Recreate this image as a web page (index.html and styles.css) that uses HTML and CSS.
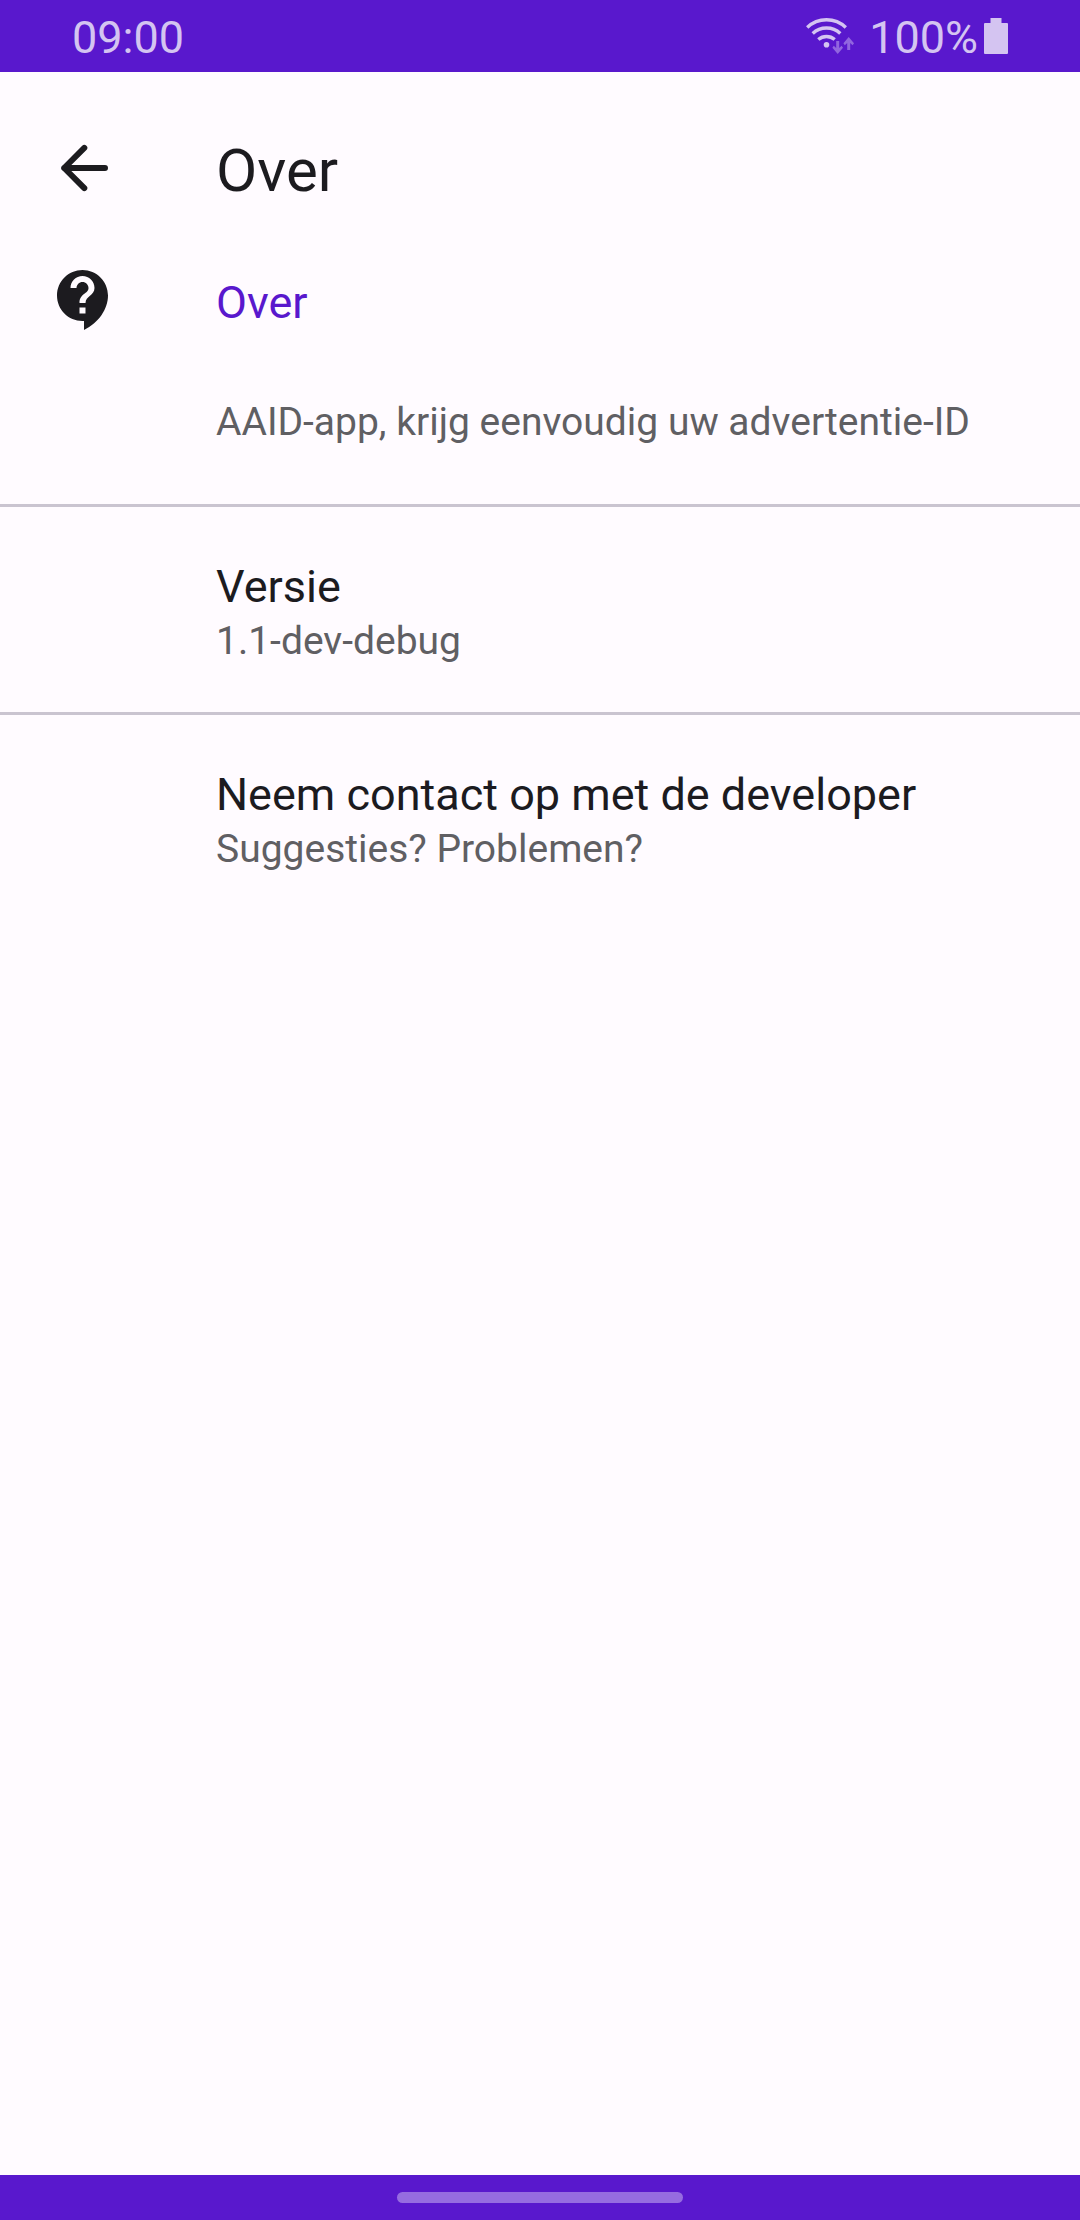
FILE: index.html
```html
<!DOCTYPE html>
<html lang="nl">
<head>
<meta charset="utf-8">
<meta name="viewport" content="width=device-width, initial-scale=1">
<title>Over</title>
<link rel="stylesheet" href="styles.css">
</head>
<body>
<div class="status-bar">
  <time class="status-clock">09:00</time>
  <div class="status-icons">
    <svg class="wifi" viewBox="0 0 48 36" aria-hidden="true">
      <g fill="none" stroke="currentColor" stroke-width="3.400">
        <path d="M1.200 9.500A28 28 0 0 1 39.800 9.500"/>
        <path d="M6.700 15.500A20 20 0 0 1 34.300 15.500"/>
        <path d="M12.300 21.500A12.500 12.500 0 0 1 28.700 21.500"/>
      </g>
      <circle cx="20.500" cy="26.700" r="2.800" fill="currentColor"/>
      <path class="wifi-traffic" d="M30.200 23h3v7l2.400-2.300 1.400 2-5.300 6.300-5.300-6.300 1.400-2 2.400 2.300zM41.200 32h3v-7l2.400 2.300 1.400-2-5.300-6.300-5.300 6.300 1.400 2 2.400-2.300z"/>
    </svg>
    <span class="status-level">100%</span>
    <svg class="battery" viewBox="0 0 24 36" aria-hidden="true">
      <path fill="currentColor" d="M6.500 0h11v5H23q1 0 1 1v29q0 1-1 1H1q-1 0-1-1V6q0-1 1-1h5.500z"/>
    </svg>
  </div>
</div>

<header class="app-bar">
  <button class="back" type="button" aria-label="Terug">
    <svg class="icon" viewBox="0 0 24 24" aria-hidden="true">
      <path fill="none" stroke="currentColor" stroke-width="2" stroke-linecap="round" stroke-linejoin="round" d="M19 12H5.400M12.100 5.300 5.400 12l6.700 6.700"/>
    </svg>
  </button>
  <h1 class="app-title">Over</h1>
</header>

<main class="content">
  <section class="about">
    <svg class="icon" viewBox="0 0 24 24" aria-hidden="true">
      <path fill="currentColor" d="M11.500 2C6.810 2 3 5.810 3 10.500S6.810 19 11.500 19h.500v3c4.860-2.340 8-7 8-11.500C20 5.810 16.190 2 11.500 2zm1 14.500h-2v-2h2v2zm0-3.500h-2c0-3.250 3-3 3-5 0-1.100-.900-2-2-2s-2 .900-2 2h-2c0-2.210 1.790-4 4-4s4 1.790 4 4c0 2.500-3 2.750-3 5z"/>
    </svg>
    <h2 class="section-title">Over</h2>
  </section>
  <p class="row intro summary">AAID-app, krijg eenvoudig uw advertentie-ID</p>
  <div class="row item">
    <h3 class="item-title">Versie</h3>
    <p class="summary">1.1-dev-debug</p>
  </div>
  <a class="row item" href="#contact">
    <span class="item-title">Neem contact op met de developer</span>
    <span class="summary">Suggesties? Problemen?</span>
  </a>
</main>

<div class="nav-bar"><div class="nav-handle"></div></div>
</body>
</html>
```
FILE: styles.css
```css
* {
  box-sizing: border-box;
}

body {
  display: flex;
  flex-direction: column;
  min-height: 100vh;
  margin: 0;
  background: #fffbff;
  color: #1c1b1f;
  font-family: Roboto, "Noto Sans", sans-serif;
}

h1,
h2,
h3,
p {
  margin: 0;
  font-weight: 400;
}

.status-bar {
  display: flex;
  align-items: center;
  justify-content: space-between;
  height: 72px;
  padding: 0 72px;
  background: #5918cd;
  color: #d4c4f1;
  font-size: 45px;
}

.status-clock,
.status-level {
  padding-top: 2px;
}

.status-icons {
  display: flex;
  align-items: center;
  gap: 6px;
}

.wifi {
  width: 48px;
  height: 36px;
  margin-right: 9px;
}

.wifi-traffic {
  fill: #9166df;
}

.battery {
  width: 24px;
  height: 36px;
}

.icon {
  display: block;
  width: 72px;
  height: 72px;
}

.app-bar {
  display: flex;
  align-items: center;
  gap: 96px;
  height: 192px;
  padding: 0 48px;
}

.back {
  padding: 0;
  border: 0;
  background: none;
  color: inherit;
}

.app-title,
.section-title {
  padding-top: 4px;
}

.app-title {
  font-size: 60px;
}

.about {
  display: flex;
  align-items: center;
  gap: 96px;
  height: 72px;
  padding: 0 48px;
}

.section-title {
  color: #5918cd;
  font-size: 45px;
}

.row {
  padding: 50px 48px 47px 216px;
  border-bottom: 3px solid #cac4d0;
}

.row:last-child {
  border-bottom: 0;
}

.intro {
  padding-top: 62px;
  padding-bottom: 58px;
}

.item {
  display: flex;
  flex-direction: column;
  color: inherit;
  text-decoration: none;
}

.item-title {
  font-size: 45px;
  line-height: 60px;
}

.summary {
  color: #605f63;
  font-size: 39px;
  line-height: 48px;
}

.nav-bar {
  display: flex;
  align-items: center;
  justify-content: center;
  height: 45px;
  margin-top: auto;
  background: #5918cd;
}

.nav-handle {
  width: 286px;
  height: 11px;
  border-radius: 6px;
  background: #966ce0;
}
```
